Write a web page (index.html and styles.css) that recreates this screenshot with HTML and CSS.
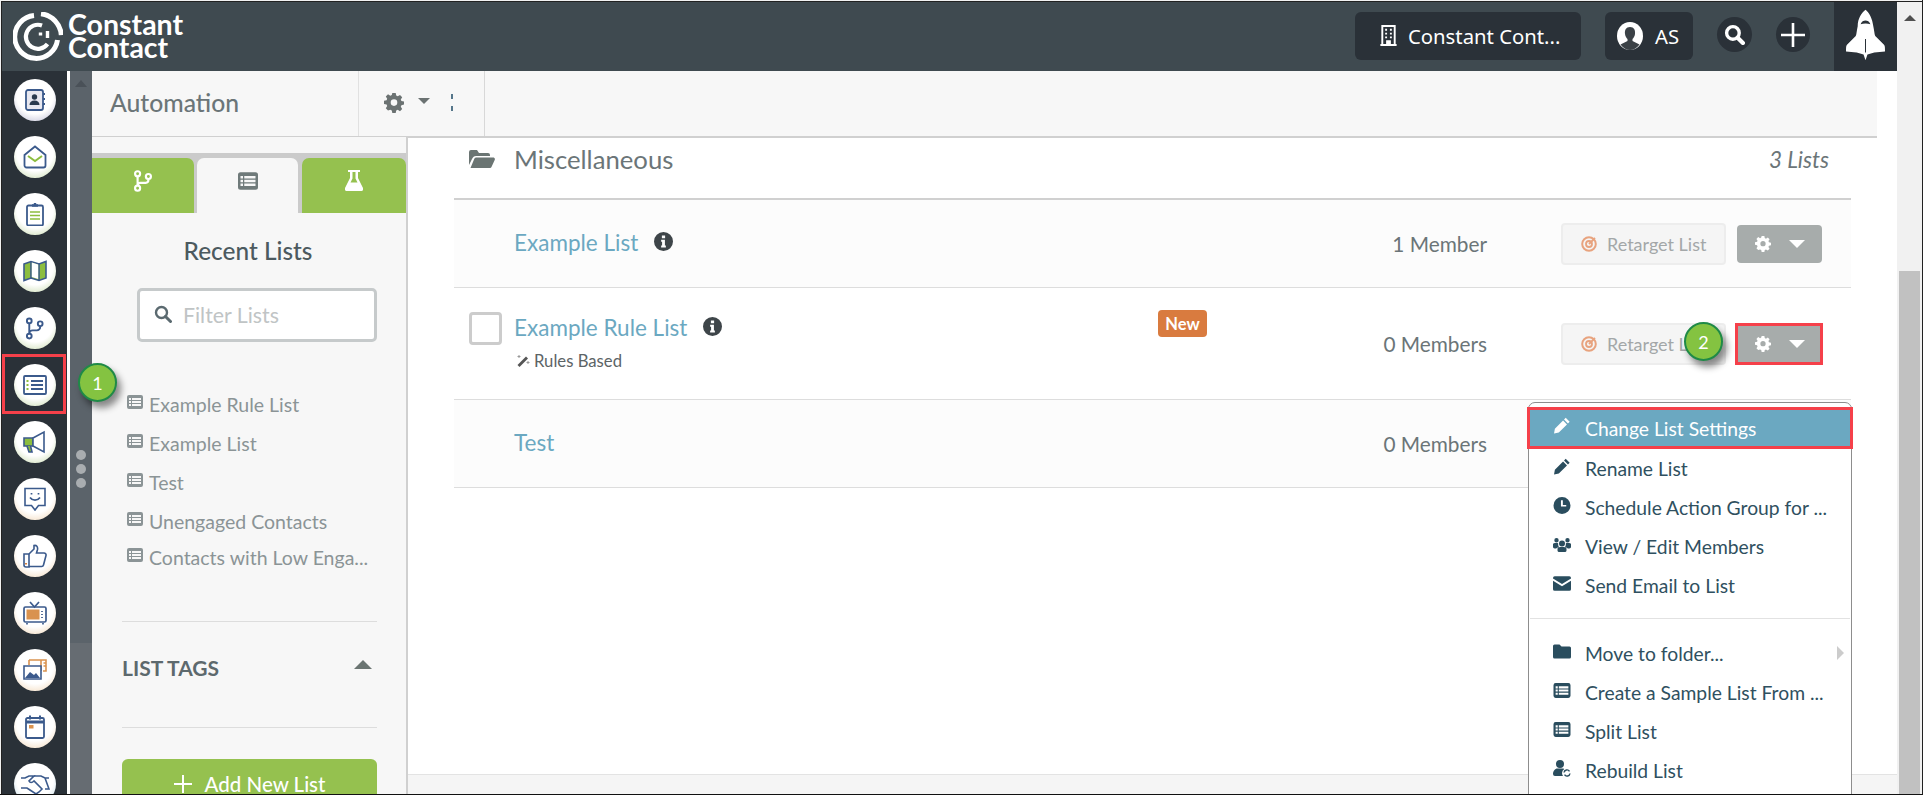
FILE: index.html
```html
<!DOCTYPE html>
<html lang="en">
<head>
<meta charset="utf-8">
<title>Constant Contact Lists</title>
<link rel="stylesheet" href="styles.css">
</head>
<body>
<svg width="0" height="0" class="defs">
  <symbol id="i-list" viewBox="0 0 16 16"><path fill="currentColor" fill-rule="evenodd" d="M2 1h12a2 2 0 0 1 2 2v10a2 2 0 0 1-2 2H2a2 2 0 0 1-2-2V3a2 2 0 0 1 2-2zM2 4v2h2V4zm3 0v2h9V4zM2 7v2h2V7zm3 0v2h9V7zm-3 3v2h2v-2zm3 0v2h9v-2z"/></symbol>
  <symbol id="i-gear" viewBox="0 0 20 20"><path fill="currentColor" fill-rule="evenodd" d="M8.3 0h3.4l.5 2.6 1.5.7 2.3-1.4 2.2 2.3-1.4 2.2.6 1.5 2.6.5v3.2l-2.6.6-.6 1.5 1.4 2.2-2.2 2.3-2.3-1.4-1.5.6-.5 2.6H8.3l-.5-2.6-1.5-.6L4 17.6l-2.2-2.3 1.4-2.2-.6-1.5L0 11V7.8l2.6-.5.6-1.5-1.4-2.2L4 1.3l2.3 1.4 1.5-.7zM10 6.3a3.3 3.3 0 1 0 0 6.6 3.3 3.3 0 0 0 0-6.6z"/></symbol>
  <symbol id="i-info" viewBox="0 0 20 20"><path fill="currentColor" fill-rule="evenodd" d="M10 0a10 10 0 1 1 0 20 10 10 0 0 1 0-20zM8.3 3.600v3h3.400v-3zM7.500 8.200v2h1v4h-1v2h5v-2h-1V8.200z"/></symbol>
  <symbol id="i-pencil" viewBox="0 0 16 16"><path fill="currentColor" d="M11.500 0.800 15.200 4.500 13.600 6.100 9.900 2.400zM9 3.300 12.700 7 5 14.700 0.500 15.500 1.300 11z"/></symbol>
  <symbol id="i-target" viewBox="0 0 16 16"><g fill="none" stroke="currentColor"><circle cx="8" cy="8" r="6.800" stroke-width="2"/><circle cx="8" cy="8" r="3" stroke-width="1.800"/><path d="M8 8 14 2" stroke-width="1.800"/></g></symbol>
  <symbol id="i-branch" viewBox="0 0 20 24"><g fill="none" stroke="currentColor" stroke-width="2.400"><circle cx="4" cy="4" r="2.800"/><circle cx="4" cy="20" r="2.800"/><circle cx="16" cy="7" r="2.800"/><path d="M4 7v10M16 10v1a3 3 0 0 1-3 3H7a3 3 0 0 0-3 3"/></g></symbol>
</svg>
<div class="frame">
  <div class="app">
    <header class="topbar">
      <div class="brand">
        <svg class="brand-mark" viewBox="0 0 50 50" fill="none" stroke="#fff">
          <path d="M21 3.500A21.500 21.500 0 1 0 44.500 28" stroke-width="5"/>
          <path d="M28 1.800A23 23 0 0 1 48.300 23" stroke-width="5"/>
          <path d="M29 13.500A12 12 0 1 0 34.500 32" stroke-width="4.200"/>
          <path d="M29 20.500A5.500 5.500 0 1 0 30 29" stroke-width="0"/>
          <path d="M27.500 20.500v3M34.500 19v7" stroke-width="3.400"/>
        </svg>
        <div class="brand-name">Constant<br>Contact</div>
      </div>
      <div class="top-actions">
        <div class="pill pill-company">
          <svg class="pill-icon" viewBox="0 0 17 22"><path fill="#fff" fill-rule="evenodd" d="M1 0h15v20h1v2H0v-2h1zM3 2v18h3v-4h5v4h3V2zM5 4h2v2H5zm5 0h2v2h-2zM5 8h2v2H5zm5 0h2v2h-2zM5 12h2v2H5zm5 0h2v2h-2z"/></svg>
          <span>Constant Cont...</span>
        </div>
        <div class="pill pill-user">
          <svg class="avatar" viewBox="0 0 26 28"><ellipse cx="13" cy="14" rx="13" ry="14" fill="#fff"/><path fill="#3b4146" d="M13 5c4 0 5.500 3 5 7-.3 2.500-1.500 4-2.500 5v2l7 3.500C20 26 17 28 13 28s-7-2-9.500-5.500l7-3.500v-2c-1-1-2.200-2.500-2.500-5-.500-4 1-7 5-7z"/></svg>
          <span>AS</span>
        </div>
        <div class="round-btn">
          <svg viewBox="0 0 20 20" class="round-icon"><circle cx="8.500" cy="8.500" r="6" fill="none" stroke="#fff" stroke-width="3.200"/><path d="M13 13l5 5" stroke="#fff" stroke-width="4" stroke-linecap="round"/></svg>
        </div>
        <div class="round-btn round-plus">
          <svg viewBox="0 0 24 24" class="round-icon plus"><path d="M12 0v24M0 12h24" stroke="#fff" stroke-width="2.600"/></svg>
        </div>
        <div class="rocket">
          <svg viewBox="0 0 40 52" class="rocket-icon"><path fill="#fff" fill-rule="evenodd" d="M20 0c4 3 7 9 8 17 1 4 1 8 2 10l9 9c1 1 1 3 1 7l-11 1-7 2-2 6-2-6-7-2-11-1c0-4 0-6 1-7l9-9c1-2 1-6 2-10C12 9 16 3 20 0zm0 11c-2 0-4 1-5 4 3-1.200 7-1.200 10 0-1-3-3-4-5-4zm-.5 19v14h1V30z"/></svg>
        </div>
      </div>
    </header>

    <div class="workspace">
      <nav class="rail">
        <div class="rail-icon tint-purple"><svg viewBox="0 0 24 24" fill="none" stroke="#3b5a8c" stroke-width="1.800"><rect x="3" y="2" width="17" height="20" rx="2" fill="#e8e8f0"/><path d="M20 6h2M20 11h2M20 16h2"/><circle cx="11.500" cy="9" r="2.700" fill="#2a3a4e" stroke="none"/><path d="M6.500 17c0-3 2-4.500 5-4.500s5 1.500 5 4.500z" fill="#2a3a4e" stroke="none"/></svg></div>
        <div class="rail-icon tint-green"><svg viewBox="0 0 24 24" fill="none" stroke="#3b5a8c" stroke-width="1.800"><path d="M1.500 10 12 1.500 22.500 10v10.500a2 2 0 0 1-2 2h-17a2 2 0 0 1-2-2z"/><path d="M5 11l7 5 7-5" stroke="#8cbd3f" stroke-width="2"/></svg></div>
        <div class="rail-icon tint-green"><svg viewBox="0 0 24 24" fill="none" stroke="#3b5a8c" stroke-width="1.800"><rect x="4" y="3.500" width="16" height="20" rx="1.500"/><path d="M9 3.500h6M12 1v3" stroke-width="2.400"/><path d="M7 10h10M7 13.500h10M7 17h10" stroke="#8cbd3f" stroke-width="1.600"/></svg></div>
        <div class="rail-icon tint-green"><svg viewBox="0 0 24 24" fill="#8cbd3f" stroke="#3b5a8c" stroke-width="1.600"><path d="M1 5l7-2.500 8 2.500 7-2.500v16.500l-7 2.500-8-2.500-7 2.500z"/><path d="M8 2.500v16.500M16 5v16.500" fill="none"/><path d="M8.800 3.500l6.400 2v14.500l-6.400-2z" fill="#fff" stroke="none"/></svg></div>
        <div class="rail-icon tint-green"><svg viewBox="0 0 20 24" class="narrow" fill="none" stroke="#3b5a8c" stroke-width="2"><circle cx="4.500" cy="4" r="2.500"/><circle cx="4.500" cy="20" r="2.500"/><circle cx="16" cy="7" r="2.500"/><path d="M4.500 6.500v11M16 9.500v1a3.500 3.500 0 0 1-3.500 3.500H8a3.500 3.500 0 0 0-3.500 3.500"/></svg></div>
        <div class="rail-icon tint-green"><svg viewBox="0 0 24 24" fill="none" stroke="#3b5a8c" stroke-width="1.800"><rect x="1" y="3" width="22" height="18" rx="1"/><path d="M8 8h12M8 12h12M8 16h12" stroke-width="1.800"/><path d="M3.500 8h2M3.500 12h2M3.500 16h2" stroke="#8cbd3f" stroke-width="2"/></svg></div>
        <div class="rail-icon tint-green"><svg viewBox="0 0 24 24" fill="none" stroke="#3b5a8c" stroke-width="1.600"><path d="M1 8h9v8H1z" fill="#8cbd3f"/><path d="M10 8l11-6v20l-11-6z" fill="#fff"/><path d="M4 16l2 6h3l-1.500-6" fill="#8cbd3f"/></svg></div>
        <div class="rail-icon tint-orange"><svg viewBox="0 0 24 24" fill="none" stroke="#3b5a8c" stroke-width="1.600"><path d="M2 1.500h20v17h-6.500L12 23l-3.500-4.500H2z"/><path d="M7 10.500c2.500 3.500 7.500 3.500 10 0" stroke-width="1.700"/><path d="M8.500 6v1.500M15.500 6v1.500" stroke-width="1.700"/></svg></div>
        <div class="rail-icon tint-orange"><svg viewBox="0 0 24 24" fill="none" stroke="#3b5a8c" stroke-width="1.600"><path d="M1 10h5v13H3a2 2 0 0 1-2-2z"/><path d="M6 10l5-5V1.500c2.500-.5 4 1 3.500 4L13.500 9H21a2 2 0 0 1 2 2.500l-2.500 9.500a2 2 0 0 1-2 1.500H6"/><path d="M3 19v1.500" stroke="#d9823f" stroke-width="2"/></svg></div>
        <div class="rail-icon tint-orange"><svg viewBox="0 0 24 24" fill="none" stroke="#3b5a8c" stroke-width="1.700"><rect x="1" y="6" width="22" height="15" rx="1.500"/><rect x="3.500" y="8.500" width="13" height="10" fill="#d9924f" stroke="none"/><path d="M7 1l4.500 5L16 1M19 10v1M19 13v1M19 16v1M4 22v1.500M20 22v1.500"/></svg></div>
        <div class="rail-icon tint-orange"><svg viewBox="0 0 24 24" fill="none" stroke-width="1.600"><path d="M6 2h17v11h-3M6 2v5" stroke="#d9924f"/><path d="M18 2v11M20.500 5h2.500M20.500 8h2.500" stroke="#d9924f"/><path d="M1 8h17v13H1z" fill="#fff" stroke="#3b5a8c"/><path d="M2 20l5-6 4 3 2-2 4 5z" fill="#3b5a8c"/></svg></div>
        <div class="rail-icon tint-orange"><svg viewBox="0 0 24 24" fill="none" stroke="#3b5a8c" stroke-width="1.800"><rect x="3" y="3" width="18" height="20" rx="1.500"/><path d="M3 7h18" stroke-width="3"/><path d="M7 .5v4M17 .5v4" stroke-width="2"/><rect x="6" y="10" width="4.500" height="3.500" fill="#d9924f" stroke="none"/></svg></div>
        <div class="rail-icon tint-blue"><svg viewBox="0 0 30 24" class="wide" fill="none" stroke="#3b5a8c" stroke-width="1.600"><path d="M1 6h4l4-2h5l-5 5c1 2 3 2 5 0l8 8-3 3-3 2-6-4-3-2H5H1"/><path d="M29 6h-4l-4-2h-7M25 6l4 11h-4"/></svg></div>
      </nav>
      <div class="gutter">
        <div class="gutter-thumb">
          <span class="gutter-arrow"></span>
          <div class="gutter-dots"><i></i><i></i><i></i></div>
        </div>
      </div>
      <div class="content">
        <div class="toolbar">
          <div class="toolbar-title">Automation</div>
          <div class="toolbar-tools">
            <svg class="tool-gear"><use href="#i-gear"/></svg>
            <span class="caret-down"></span>
            <span class="tool-dots"><i></i><i></i></span>
          </div>
        </div>
        <div class="panels">
          <aside class="sidebar">
            <div class="tabs">
              <div class="tab tab-green"><svg class="tab-branch"><use href="#i-branch"/></svg></div>
              <div class="tab tab-active"><svg class="tab-list"><use href="#i-list"/></svg></div>
              <div class="tab tab-green"><svg class="tab-flask" viewBox="0 0 18 21"><path fill="#fff" fill-rule="evenodd" d="M3 0h12v2h-2v6l5 10c.6 1.500 0 3-2 3H2c-2 0-2.600-1.500-2-3L5 8V2H3zm4.500 2v6.500l-2 4h7l-2-4V2z"/></svg></div>
            </div>
            <h2 class="side-title">Recent Lists</h2>
            <div class="filter">
              <svg class="filter-icon" viewBox="0 0 18 18"><circle cx="7.500" cy="7.500" r="5.500" fill="none" stroke="#5b6a70" stroke-width="2.400"/><path d="M11.500 11.500l5 5" stroke="#5b6a70" stroke-width="3" stroke-linecap="round"/></svg>
              <span class="filter-text">Filter Lists</span>
            </div>
            <ul class="recent">
              <li><svg><use href="#i-list"/></svg><span>Example Rule List</span></li>
              <li><svg><use href="#i-list"/></svg><span>Example List</span></li>
              <li><svg><use href="#i-list"/></svg><span>Test</span></li>
              <li><svg><use href="#i-list"/></svg><span>Unengaged Contacts</span></li>
              <li class="recent-tight"><svg><use href="#i-list"/></svg><span>Contacts with Low Enga...</span></li>
            </ul>
            <div class="tags-head">
              <span>LIST TAGS</span>
              <span class="caret-up"></span>
            </div>
            <button class="add-list"><svg viewBox="0 0 18 18"><path d="M9 0v18M0 9h18" stroke="#fff" stroke-width="2"/></svg>Add New List</button>
          </aside>
          <main class="lists">
            <div class="folder">
              <svg class="folder-icon" viewBox="0 0 27 18"><path fill="#6b7573" d="M1 2a2 2 0 0 1 2-2h6l2 3h9a2 2 0 0 1 2 2v1H8C6 6 5 7 4 9l-3 6z"/><path fill="#6b7573" d="M8 7.500h17c1.500 0 2.300 1 1.700 2.500l-3 6.500c-.4 1-1.200 1.500-2.200 1.500H2.500L6 9.500C6.500 8.200 7 7.500 8 7.500z"/></svg>
              <span class="folder-name">Miscellaneous</span>
              <span class="folder-count">3 Lists</span>
            </div>
            <div class="row row-tint">
              <div class="row-main"><a class="row-link">Example List</a><svg class="info"><use href="#i-info"/></svg></div>
              <div class="row-count">1 Member</div>
              <div class="row-actions">
                <div class="retarget"><svg><use href="#i-target"/></svg>Retarget List</div>
                <div class="gear-btn"><svg><use href="#i-gear"/></svg><span class="caret-white"></span></div>
              </div>
            </div>
            <div class="row row-tall">
              <span class="check"></span>
              <div class="row-main row-main-stack">
                <div class="row-title"><a class="row-link">Example Rule List</a><svg class="info"><use href="#i-info"/></svg></div>
                <div class="rules"><svg viewBox="0 0 14 14"><path fill="#555" d="M10 2.500l2 2L3.500 13l-2-2z"/><path stroke="#999" d="M3 1v3M1.500 2.500h3M12 7v3M10.500 8.500h3"/></svg>Rules Based</div>
              </div>
              <span class="badge-new">New</span>
              <div class="row-count">0 Members</div>
              <div class="row-actions">
                <div class="retarget"><svg><use href="#i-target"/></svg>Retarget List</div>
                <div class="gear-btn gear-flagged"><svg><use href="#i-gear"/></svg><span class="caret-white"></span></div>
              </div>
              <span class="step step-2">2</span>
            </div>
            <div class="row row-tint">
              <div class="row-main"><a class="row-link">Test</a></div>
              <div class="row-count">0 Members</div>
              <div class="row-actions"></div>
            </div>
            <div class="footer-strip"></div>
            <div class="menu">
              <div class="menu-item menu-active"><svg><use href="#i-pencil"/></svg>Change List Settings</div>
              <div class="menu-item"><svg><use href="#i-pencil"/></svg>Rename List</div>
              <div class="menu-item"><svg viewBox="0 0 16 16"><path fill="currentColor" fill-rule="evenodd" d="M8 0a8 8 0 1 1 0 16A8 8 0 0 1 8 0zM7 3v6h5V7.500H8.800V3z"/></svg>Schedule Action Group for ...</div>
              <div class="menu-item"><svg viewBox="0 0 18 16"><path fill="currentColor" d="M9 4a3 3 0 1 1 0 6 3 3 0 0 1 0-6zM3.500 1.500a2.200 2.200 0 1 1 0 4.400 2.200 2.200 0 0 1 0-4.400zm11 0a2.200 2.200 0 1 1 0 4.400 2.200 2.200 0 0 1 0-4.400zM0 7.500C0 7 1 6.500 3.500 6.500c1 0 1.500.2 1.700.4-.3 2 .5 3.300 1 3.800C4 11 3 12 3 12c-1.500 0-3-.5-3-1.500zm18 0c0-.5-1-1-3.500-1-1 0-1.500.2-1.700.4.300 2-.5 3.300-1 3.800 2.200.3 3.200 1.300 3.200 1.300 1.500 0 3-.5 3-1.500zM4.500 12c0-.8 1.500-1.500 4.500-1.500s4.500.7 4.500 1.500v2c0 1-1 1.500-2 1.500h-5c-1 0-2-.5-2-1.500z"/></svg>View / Edit Members</div>
              <div class="menu-item"><svg viewBox="0 0 16 13"><path fill="currentColor" d="M1.500 0h13A1.500 1.500 0 0 1 16 1.500v.6L8 7 0 2.100v-.6A1.500 1.500 0 0 1 1.500 0zM0 4l8 5 8-5v7.500a1.500 1.500 0 0 1-1.500 1.500h-13A1.500 1.500 0 0 1 0 11.500z"/></svg>Send Email to List</div>
              <div class="menu-sep"></div>
              <div class="menu-item menu-sub"><svg viewBox="0 0 18 14"><path fill="currentColor" d="M1.500 0h5L8.500 2h8A1.500 1.500 0 0 1 18 3.500v9a1.500 1.500 0 0 1-1.500 1.500h-15A1.500 1.500 0 0 1 0 12.500v-11A1.500 1.500 0 0 1 1.500 0z"/></svg>Move to folder...</div>
              <div class="menu-item"><svg><use href="#i-list"/></svg>Create a Sample List From ...</div>
              <div class="menu-item"><svg><use href="#i-list"/></svg>Split List</div>
              <div class="menu-item"><svg viewBox="0 0 18 17"><path fill="currentColor" d="M7 0a4 4 0 1 1 0 8 4 4 0 0 1 0-8zM0 14c0-3 2-5.500 4.500-5.500h5c.6 0 1.200.1 1.800.4A5 5 0 0 0 9 13c0 1.100.3 2.100 1 3H2a2 2 0 0 1-2-2z"/><path fill="none" stroke="currentColor" stroke-width="1.400" d="M11 12.500a3 3 0 0 1 5.500-1.200M17 13.500a3 3 0 0 1-5.500 1.200"/></svg>Rebuild List</div>
            </div>
          </main>
        </div>
      </div>
    </div>
    <div class="flag flag-rail"></div>
    <span class="step step-1">1</span>
  </div>
  <div class="scrollbar">
    <span class="scroll-arrow"></span>
    <div class="scroll-thumb"></div>
  </div>
</div>
</body>
</html>
```
FILE: styles.css
```css
* { box-sizing: border-box; }
html, body { margin: 0; padding: 0; height: 100%; overflow: hidden; background: #fff; }
body { font-family: "Lato", "Liberation Sans", sans-serif; color: #5f6b70; }
.defs { position: absolute; }

.frame { width: 1923px; height: 795px; padding: 2px 0 0 2px; display: flex; background: #f1f1f1; border-bottom: 1px solid #111; border-right: 1px solid #222; position: relative; }
.frame::before { content: ""; position: absolute; left: 1px; top: 1px; right: 0; bottom: 0; border-left: 1px solid #222; border-top: 1px solid #222; pointer-events: none; z-index: 9; }
.app { flex: 1; min-width: 0; display: flex; flex-direction: column; position: relative; overflow: hidden; background: #fff; }

/* top bar */
.topbar { height: 69px; flex: none; background: #3f4a50; display: flex; justify-content: space-between; align-items: stretch; }
.brand { display: flex; align-items: center; padding-left: 11px; gap: 5px; }
.brand-mark { width: 50px; height: 50px; }
.brand-name { color: #fff; font: 700 28.500px/23px "Lato", sans-serif; margin-top: -2px; }
.top-actions { display: flex; align-items: center; }
.pill { height: 48px; background: #2a3138; border-radius: 6px; display: flex; align-items: center; color: #fff; font: 400 20.300px "Noto Sans", sans-serif; margin-top: -2px; }
.pill-company { width: 226px; padding-left: 25px; gap: 11px; }
.pill-icon { width: 17px; height: 21px; }
.pill-user { width: 88px; margin-left: 24px; padding-left: 12px; gap: 12px; }
.avatar { width: 26px; height: 28px; }
.round-btn { width: 35px; height: 35px; border-radius: 50%; background: #2a3138; display: flex; align-items: center; justify-content: center; margin-left: 24px; margin-top: -4px; }
.round-plus { width: 34px; }
.round-icon { width: 21px; height: 21px; }
.round-icon.plus { width: 24px; height: 24px; }
.rocket { width: 63px; height: 69px; background: #2a3138; margin-left: 24px; display: flex; justify-content: center; align-items: center; }
.rocket-icon { width: 39px; height: 52px; margin-top: -4px; }

/* workspace */
.workspace { flex: 1; min-height: 0; display: flex; }
.rail { width: 65px; flex: none; background: #2a3138; display: flex; flex-direction: column; align-items: center; gap: 15px; padding-top: 8px; overflow: hidden; margin-right: 1px; }
.rail-icon { width: 42px; height: 42px; flex: none; border-radius: 50%; background: #fff; display: flex; align-items: center; justify-content: center; }
.rail-icon svg { width: 24px; height: 24px; }
.rail-icon svg.narrow { width: 19px; height: 23px; }
.rail-icon svg.wide { width: 30px; height: 24px; }
.tint-purple { background: radial-gradient(circle at 50% 40%, #fff 55%, #dcdce8 76%, #fff 82%); }
.tint-green { background: radial-gradient(circle at 50% 40%, #fff 55%, #e2ecd4 76%, #fff 82%); }
.tint-orange { background: radial-gradient(circle at 50% 40%, #fff 55%, #f8ead9 76%, #fff 82%); }
.tint-blue { background: radial-gradient(circle at 50% 40%, #fff 55%, #d9e8ef 76%, #fff 82%); }

.gutter { flex: none; background: #666c72; border-left: 2px solid #fff; width: 24px; }
.gutter-thumb { height: 572px; width: 22px; background: #5b636a; position: relative; }
.gutter-arrow { position: absolute; left: 5px; top: 9px; border: 6px solid transparent; border-top: 0; border-bottom: 7px solid #4a5158; }
.gutter-dots { position: absolute; left: 6px; top: 379px; display: flex; flex-direction: column; gap: 4px; }
.gutter-dots i { width: 10px; height: 10px; border-radius: 50%; background: #a9adb0; display: block; }

.content { flex: 1; min-width: 0; display: flex; flex-direction: column; background: #fff; }
.toolbar { height: 67px; flex: none; background: #f7f7f7; border-bottom: 2px solid #d0d0d0; margin-right: 20px; display: flex; align-items: stretch; }
.toolbar-title { width: 267px; padding-left: 18px; font-size: 24.700px; font-weight: 500; color: #6b7578; display: flex; align-items: center; border-right: 1px solid #e1e1e1; line-height: 1; }
.toolbar-tools { width: 126px; border-right: 1px solid #d8d8d8; display: flex; align-items: center; padding-left: 25px; padding-bottom: 2px; }
.tool-gear { width: 20px; height: 20px; color: #6b7272; }
.caret-down { margin-left: 14px; border: 6px solid transparent; border-bottom: 0; border-top: 6px solid #6b7272; margin-top: -3px; }
.tool-dots { margin-left: 21px; display: flex; flex-direction: column; gap: 7px; }
.tool-dots i { width: 2px; height: 5px; background: #55768a; display: block; }

.panels { flex: 1; min-height: 0; display: flex; }
.sidebar { width: 316px; flex: none; background: #f7f7f7; border-right: 2px solid #d0d0d0; padding-top: 15px; display: flex; flex-direction: column; margin-top: -1px; position: relative; z-index: 1; }
.tabs { height: 60px; flex: none; background: #cbcbcb; display: flex; align-items: flex-end; gap: 3px; padding-top: 5px; margin-top: 1px; }
.tab { height: 100%; display: flex; align-items: center; justify-content: center; border-radius: 7px 7px 0 0; }
.tab:nth-child(1) { width: 102px; border-top-left-radius: 0; }
.tab:nth-child(2) { width: 101px; }
.tab:nth-child(3) { flex: 1; margin-left: 1px; }
.tab-green { background: #95c14f; color: #fff; }
.tab-active { background: #f7f7f7; color: #6f7a7a; }
.tab-branch { width: 18px; height: 22px; margin-top: -10px; }
.tab-list { width: 20px; height: 20px; margin-top: -10px; }
.tab-flask { width: 18px; height: 21px; margin-top: -10px; }
.side-title { margin: 24px 0 0; text-align: center; font-size: 24.400px; font-weight: 500; color: #4c5a5f; line-height: 28px; padding-right: 2px; }
.filter { margin: 23px 29px 0 45px; height: 54px; flex: none; background: #fff; border: 3px solid #c6cacb; border-radius: 5px; display: flex; align-items: center; padding-left: 14px; gap: 11px; }
.filter-icon { width: 18px; height: 18px; margin-top: -2px; }
.filter-text { font-size: 21.300px; color: #c0c4c5; }
.recent { list-style: none; margin: 43px 0 0; padding: 0 0 0 35px; height: 196px; flex: none; }
.recent li { height: 39px; display: flex; align-items: center; gap: 6px; font-size: 19.500px; color: #8b9496; white-space: nowrap; }
.recent li.recent-tight { height: 34px; margin-top: -1px; }
.recent li svg { width: 16px; height: 16px; color: #8b9496; margin-top: -5px; flex: none; }
.tags-head { margin: 40px 29px 0 30px; height: 107px; flex: none; border-top: 1px solid #ddd; border-bottom: 1px solid #ddd; display: flex; align-items: center; justify-content: space-between; font-size: 21px; font-weight: 700; color: #5d696d; padding: 0 5px 14px 0; }
.caret-up { border: 9px solid transparent; border-top: 0; border-bottom: 9px solid #6b7572; margin-top: -7px; }
.add-list { margin: 31px 29px 0 30px; height: 50px; flex: none; border: 0; border-radius: 6px; background: #95c14f; color: #fff; font: 500 20.500px/22px "Lato", sans-serif; display: flex; align-items: center; justify-content: center; gap: 13px; padding: 0; }
.add-list svg { width: 18px; height: 18px; }

/* lists */
.lists { flex: 1; min-width: 0; position: relative; padding: 0 0 0 46px; }
.folder { height: 62px; width: 1397px; border-bottom: 2px solid #d0d0d0; display: flex; align-items: center; padding-left: 14px; padding-bottom: 18px; color: #6b7578; }
.folder-icon { width: 27px; height: 18px; flex: none; }
.folder-name { font-size: 25.700px; margin-left: 19px; flex: 1; color: #6b7578; }
.folder-count { font-size: 22.500px; font-style: italic; margin-right: 22px; color: #6b7578; }
.row { width: 1397px; position: relative; display: flex; align-items: center; border-bottom: 1px solid #ddd; background: #fff; }
.row-tint { height: 88px; background: #fcfcfc; padding-bottom: 2px; }
.row-tall { height: 112px; }
.row-main { display: flex; align-items: center; margin-left: 60px; width: 600px; }
.row-tall .row-main { margin-left: 12px; width: auto; }
.row-main-stack { flex-direction: column; align-items: flex-start; margin-top: -2px; }
.row-title { display: flex; align-items: center; }
.row-link { font-size: 22.500px; color: #6ba8c1; line-height: 28px; }
.info { width: 19px; height: 19px; color: #3e4549; margin-left: 16px; margin-top: -3px; }
.rules { margin-top: 9px; font-size: 16.700px; color: #5c6466; display: flex; align-items: center; gap: 4px; margin-left: 2px; line-height: 20px; }
.rules svg { width: 14px; height: 14px; }
.check { margin-left: 15px; width: 33px; height: 33px; border: 3px solid #cccccc; border-radius: 4px; background: #fff; flex: none; margin-top: -31px; }
.badge-new { position: absolute; left: 704px; top: 22px; width: 49px; height: 27px; background: #d97b3f; color: #fff; font-size: 16.500px; font-weight: 700; border-radius: 4px; display: flex; align-items: center; justify-content: center; }
.row-count { position: absolute; right: 364px; font-size: 20.800px; color: #6b7578; top: calc(50% - 1px); transform: translateY(-50%); white-space: nowrap; }
.row-actions { position: absolute; left: 1107px; top: 0; bottom: 0; display: flex; align-items: center; gap: 11px; }
.retarget { width: 165px; height: 42px; border: 2px solid #ededed; background: #f5f5f5; border-radius: 4px; display: flex; align-items: center; font-size: 18px; color: #a3a7a8; padding-left: 18px; gap: 10px; }
.retarget svg { width: 16px; height: 16px; color: #e8a37e; }
.gear-btn { width: 85px; height: 38px; background: #a7acab; border-radius: 4px; display: flex; align-items: center; padding-left: 18px; gap: 18px; }
.gear-btn svg { width: 16px; height: 16px; color: #fff; }
.caret-white { border: 8px solid transparent; border-bottom: 0; border-top: 8px solid #fff; }
.gear-flagged { border-radius: 0; width: 88px; height: 42px; margin-left: -2px; border: 3px solid #f5404a; padding-left: 17px; }

.step { position: absolute; width: 39px; height: 39px; border-radius: 50%; background: #84c341; border: 2px solid #1f8a47; color: #fff; font-size: 18px; display: flex; align-items: center; justify-content: center; box-shadow: 4px 6px 7px rgba(0,0,0,.45); z-index: 5; }
.step-1 { left: 76px; top: 361px; }
.step-2 { left: 1230px; top: 34px; }
.flag { position: absolute; border: 3px solid #f5404a; z-index: 5; }
.flag-rail { left: 0; top: 352px; width: 64px; height: 60px; }

.footer-strip { position: absolute; left: 0; right: 0; top: 636px; height: 30px; background: #f5f5f5; border-top: 1px solid #e3e3e3; }
.menu { position: absolute; left: 1120px; top: 264px; width: 324px; height: 420px; background: #fff; border: 1px solid #8d8d8d; border-radius: 7px; padding-top: 4px; z-index: 4; }
.menu-item { height: 39px; display: flex; align-items: center; padding-left: 24px; gap: 14px; font-size: 19.300px; color: #2f5060; white-space: nowrap; position: relative; }
.menu-item svg { width: 18px; height: 17px; color: #2a4d5e; flex: none; margin-top: -5px; }
.menu-active { height: 42px; margin: 0 -1px 0 -2px; width: 326px; background: #6ba8c1; color: #fff; border: 3px solid #f5404a; padding-left: 23px; }
.menu-active svg { color: #fff; }
.menu-sep { height: 1px; background: #e2e2e2; margin: 13px 1px 15px; }
.menu-sub::after { content: ""; position: absolute; right: 7px; top: 12px; border: 7px solid transparent; border-right: 0; border-left: 7px solid #ccc; }

/* right scrollbar */
.scrollbar { width: 25px; flex: none; background: #f1f1f1; position: relative; }
.scroll-arrow { position: absolute; left: 7px; top: 13px; border: 6px solid transparent; border-top: 0; border-bottom: 6px solid #505050; }
.scroll-thumb { position: absolute; left: 2px; top: 269px; width: 21px; bottom: 0; background: #c1c1c1; }
```
